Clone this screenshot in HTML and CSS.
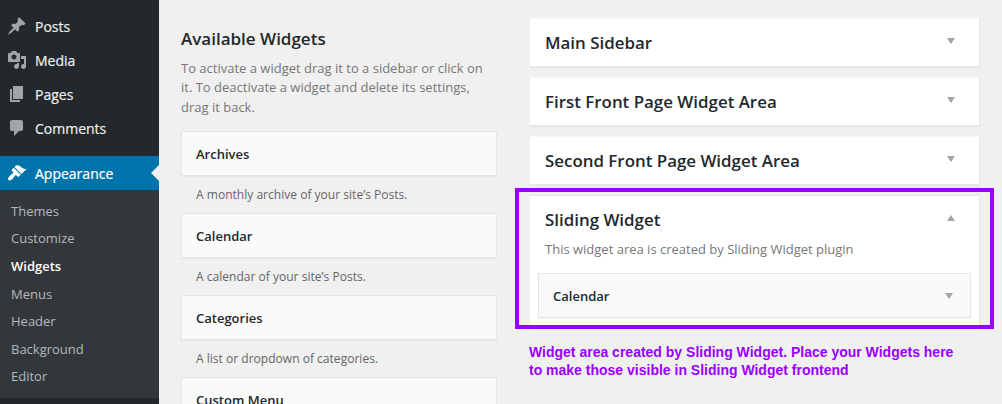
FILE: index.html
```html
<!DOCTYPE html>
<html lang="en">
<head>
<meta charset="utf-8">
<title>Widgets</title>
<link rel="stylesheet" href="styles.css">
</head>
<body>
<div class="admin">
  <nav class="menu">
    <a class="menu-item"><svg class="icon" viewBox="0 0 20 20"><path d="M10.44 3.02l1.82-1.82 6.36 6.35-1.83 1.82c-1.05-.68-2.48-.57-3.41.36l-.75.75c-.92.93-1.04 2.35-.35 3.41l-1.83 1.82-2.41-2.41-2.8 2.79c-.42.42-3.38 2.71-3.8 2.29s1.86-3.39 2.28-3.81l2.79-2.79L4.1 9.36l1.83-1.82c1.05.69 2.48.57 3.4-.36l.75-.75c.93-.92 1.05-2.35.36-3.41z"/></svg>Posts</a>
    <a class="menu-item"><svg class="icon" viewBox="0 0 20 20"><path d="M13 11V4c0-.55-.45-1-1-1h-1.67L9 1H5L3.67 3H2c-.55 0-1 .45-1 1v7c0 .55.45 1 1 1h10c.55 0 1-.45 1-1zM7 4.5c1.38 0 2.5 1.12 2.5 2.5S8.38 9.5 7 9.5 4.5 8.38 4.5 7 5.62 4.5 7 4.5zM14 6h5v10.5c0 1.38-1.12 2.5-2.5 2.5S14 17.88 14 16.5s1.12-2.5 2.5-2.5c.17 0 .34.02.5.05V9h-3V6zm-4 8.05V13h2v3.5c0 1.38-1.12 2.5-2.5 2.5S7 17.88 7 16.5 8.12 14 9.5 14c.17 0 .34.02.5.05z"/></svg>Media</a>
    <a class="menu-item"><svg class="icon" viewBox="0 0 20 20"><path d="M6 15V2h10v13H6zm-1 1h8v2H3V5h2v11z"/></svg>Pages</a>
    <a class="menu-item"><svg class="icon" viewBox="0 0 20 20"><path d="M5 2h9c1.1 0 2 .9 2 2v7c0 1.1-.9 2-2 2h-2l-5 5v-5H5c-1.1 0-2-.9-2-2V4c0-1.1.9-2 2-2z"/></svg>Comments</a>
    <a class="menu-item current"><svg class="icon" viewBox="0 0 20 20"><path d="M14.48 11.06L7.41 3.99l1.5-1.5c.5-.56 2.3-.47 3.51.32 1.21.8 1.43 1.28 2.91 2.1 1.18.64 2.45 1.26 4.45.85zm-.71.71L6.7 4.7 4.93 6.47c-.39.39-.39 1.02 0 1.41l1.06 1.06c.39.39.39 1.03 0 1.42-.6.6-1.43 1.11-2.21 1.69-.35.26-.7.53-1.01.84C1.43 14.23.4 16.08 1.4 17.07c.99 1 2.84-.03 4.18-1.36.31-.31.58-.66.85-1.02.57-.78 1.08-1.61 1.69-2.21.39-.39 1.02-.39 1.41 0l1.06 1.06c.39.39 1.02.39 1.41 0z"/></svg>Appearance</a>
    <div class="submenu">
      <a>Themes</a>
      <a>Customize</a>
      <a class="active">Widgets</a>
      <a>Menus</a>
      <a>Header</a>
      <a>Background</a>
      <a>Editor</a>
    </div>
  </nav>

  <section class="available">
    <h2>Available Widgets</h2>
    <p class="intro">To activate a widget drag it to a sidebar or click on it. To deactivate a widget and delete its settings, drag it back.</p>
    <div class="widget">Archives</div>
    <p class="about">A monthly archive of your site’s Posts.</p>
    <div class="widget">Calendar</div>
    <p class="about">A calendar of your site’s Posts.</p>
    <div class="widget">Categories</div>
    <p class="about">A list or dropdown of categories.</p>
    <div class="widget">Custom Menu</div>
  </section>

  <section class="areas">
    <div class="area"><h3>Main Sidebar</h3><svg class="arrow" viewBox="0 0 8 6"><path d="M0 0h8L4 6z"/></svg></div>
    <div class="area"><h3>First Front Page Widget Area</h3><svg class="arrow" viewBox="0 0 8 6"><path d="M0 0h8L4 6z"/></svg></div>
    <div class="area"><h3>Second Front Page Widget Area</h3><svg class="arrow" viewBox="0 0 8 6"><path d="M0 0h8L4 6z"/></svg></div>
    <div class="area open">
      <div class="area-head"><h3>Sliding Widget</h3><svg class="arrow" viewBox="0 0 8 6"><path d="M0 6h8L4 0z"/></svg></div>
      <p class="area-about">This widget area is created by Sliding Widget plugin</p>
      <div class="widget placed">Calendar<svg class="arrow" viewBox="0 0 8 6"><path d="M0 0h8L4 6z"/></svg></div>
      <div class="highlight"></div>
    </div>
    <p class="note">Widget area created by Sliding Widget. Place your Widgets here<br>to make those visible in Sliding Widget frontend</p>
  </section>
</div>
</body>
</html>
```

FILE: styles.css
```css
* { box-sizing: border-box; }

body {
  margin: 0;
  background: #f0f0f0;
  color: #23282d;
  font-family: "Open Sans", sans-serif;
  font-size: 13px;
}

h2, h3, p { margin: 0; }

.admin {
  display: flex;
  height: 404px;
  overflow: hidden;
}

.menu {
  flex: none;
  width: 159px;
  padding-top: 9px;
  background: #23282d;
}

.menu-item {
  display: flex;
  align-items: center;
  gap: 8px;
  height: 34px;
  padding-left: 7px;
  color: #eee;
  font-size: 14px;
  -webkit-text-stroke: 0.2px;
}

.icon {
  width: 20px;
  height: 20px;
  fill: #a0a5aa;
}

.current {
  position: relative;
  margin-top: 11px;
  background: #0073aa;
  color: #fff;
}

.current .icon { fill: #fff; }

.current::after {
  content: "";
  position: absolute;
  top: 9px;
  right: 0;
  border: 8px solid transparent;
  border-left-width: 0;
  border-right-color: #f0f0f0;
}

.submenu {
  display: flex;
  flex-direction: column;
  height: 208px;
  padding: 7.6px 0 0 11px;
  background: #32373c;
  color: #b4b9be;
}

.submenu a {
  flex: none;
  height: 27.65px;
  line-height: 27.65px;
}

.submenu .active {
  color: #fff;
  font-weight: 600;
}

.available {
  flex: none;
  width: 316px;
  margin-left: 22px;
  padding-top: 26px;
}

.available h2 {
  font-size: 17px;
  font-weight: 600;
  line-height: 26px;
}

.intro {
  height: 72px;
  padding-top: 6.6px;
  color: #777;
  line-height: 19.5px;
  margin-bottom: 7px;
}

.widget {
  height: 45px;
  padding-left: 14px;
  border: 1px solid #e5e5e5;
  background: #fafafa;
  box-shadow: 0 1px 1px rgba(0, 0, 0, 0.04);
  font-weight: 600;
  line-height: 44px;
}

.about {
  height: 37px;
  padding-left: 15px;
  color: #666;
  font-size: 12.05px;
  line-height: 38px;
}

.areas {
  flex: none;
  display: flex;
  flex-direction: column;
  gap: 10px;
  width: 450px;
  margin-left: 33px;
  padding-top: 18px;
}

.area {
  display: flex;
  justify-content: space-between;
  flex: none;
  height: 49px;
  padding: 0 24px 0 15px;
  border: 1px solid #e9e9e9;
  border-top-color: #f8f8f8;
  border-left: 0;
  background: #fff;
  box-shadow: 0 1px 1px rgba(0, 0, 0, 0.04);
}

.area h3 {
  font-size: 16.9px;
  font-weight: 600;
  line-height: 47px;
}

.arrow {
  width: 8px;
  height: 6px;
  margin-top: 19px;
  fill: #a0a5aa;
}

.open {
  position: relative;
  display: block;
  height: 133px;
  padding: 0 8px;
  border-top-color: #e5e5e5;
}

.area-head {
  display: flex;
  justify-content: space-between;
  height: 43px;
  padding: 0 16px 0 7px;
}

.area-about {
  height: 34px;
  padding-left: 7px;
  color: #777;
  line-height: 20px;
}

.placed {
  display: flex;
  justify-content: space-between;
  padding-right: 17px;
}

.highlight {
  position: absolute;
  top: -8px;
  left: -15px;
  width: 479px;
  height: 141px;
  border: 4px solid #90f;
}

.note {
  margin: 5px 0 0 -1px;
  color: #90f;
  font: bold 14px/18px "Liberation Sans", Arial, sans-serif;
  white-space: nowrap;
}
```
